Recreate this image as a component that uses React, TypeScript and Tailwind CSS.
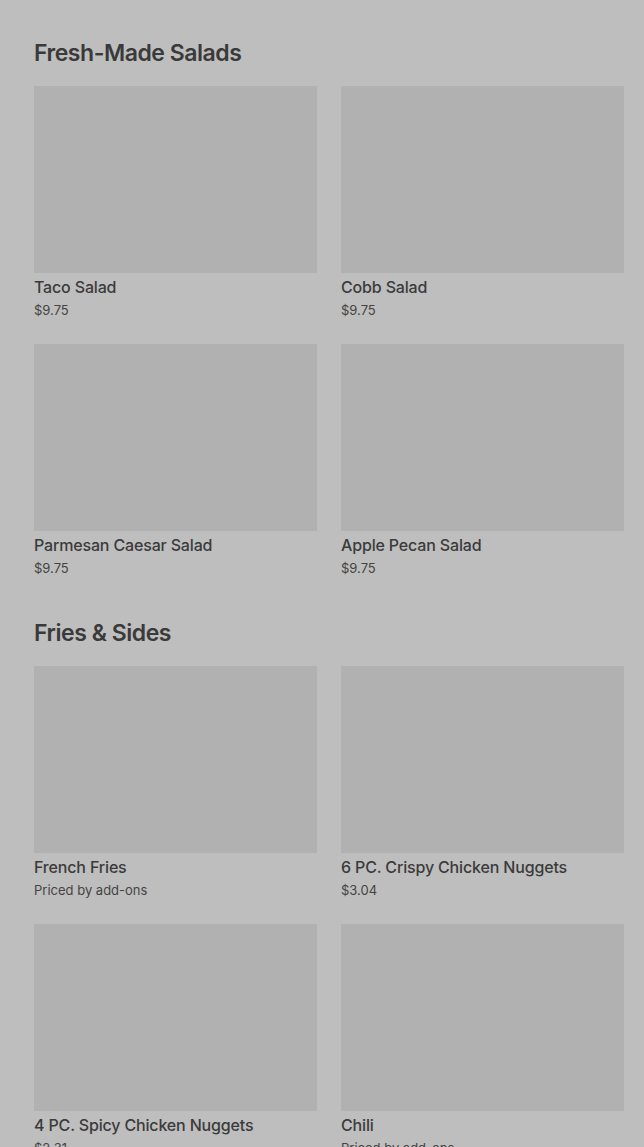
const salads = [
  { name: 'Taco Salad', price: '$9.75' },
  { name: 'Cobb Salad', price: '$9.75' },
  { name: 'Parmesan Caesar Salad', price: '$9.75' },
  { name: 'Apple Pecan Salad', price: '$9.75' },
]

const sides = [
  { name: 'French Fries', price: 'Priced by add-ons' },
  { name: '6 PC. Crispy Chicken Nuggets', price: '$3.04' },
  { name: '4 PC. Spicy Chicken Nuggets', price: '$2.31' },
  { name: 'Chili', price: 'Priced by add-ons' },
]

function Item({ name, price }: { name: string; price: string }) {
  return (
    <div>
      <div className="h-[187px] bg-[#b1b1b1]" />
      <div className="mt-1 text-base leading-5 font-medium tracking-[-0.01em] text-[#3b3b3b]">{name}</div>
      <div className="mt-[5px] text-[13px] leading-4 text-[#444]">{price}</div>
    </div>
  )
}

function Section({ title, items }: { title: string; items: { name: string; price: string }[] }) {
  return (
    <section className="pt-[39px] pb-1">
      <h2 className="text-[23px] leading-7 font-semibold tracking-[-0.02em] text-[#3a3a3a] mb-[19px]">{title}</h2>
      <div className="grid grid-cols-2 gap-x-6 gap-y-[26px]">
        {items.map(it => <Item key={it.name} {...it} />)}
      </div>
    </section>
  )
}

export default function App() {
  return (
    <div className="h-[1147px] bg-[#bebebe] overflow-hidden pl-[34px] pr-5" style={{ fontFamily: 'Inter, "Noto Sans", sans-serif' }}>
      <Section title="Fresh-Made Salads" items={salads} />
      <Section title="Fries & Sides" items={sides} />
    </div>
  )
}
